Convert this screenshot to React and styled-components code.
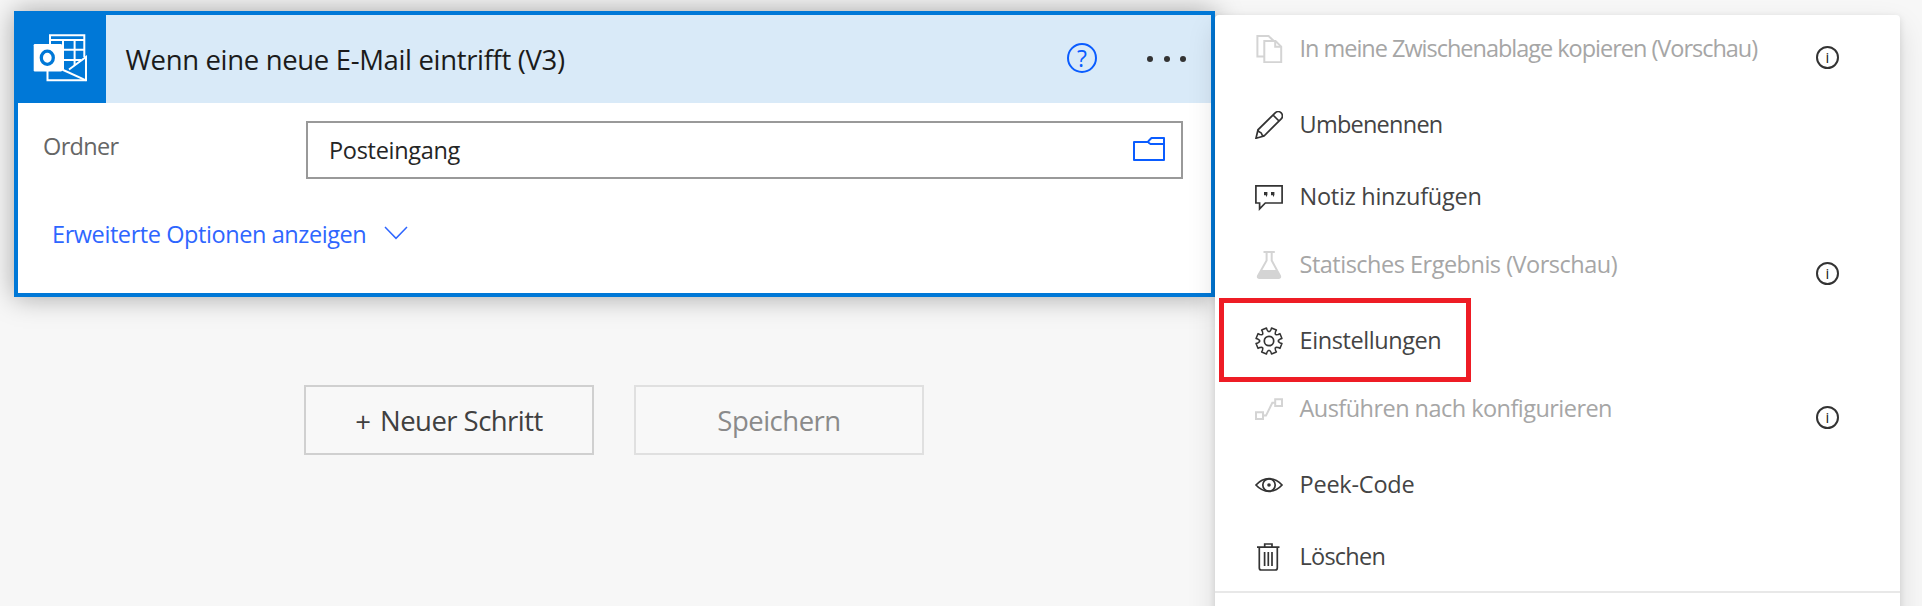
import React from "react";
import styled, { createGlobalStyle } from "styled-components";

const GlobalStyle = createGlobalStyle`
  * { box-sizing: border-box; }
  body {
    margin: 0;
    background: #f7f7f7;
    font-family: "Open Sans", "Noto Sans", sans-serif;
    color: #1b1b1b;
  }
`;

const Page = styled.div`
  display: flex;
  align-items: flex-start;
  width: 1922px;
  height: 606px;
  overflow: hidden;
  background: #f7f7f7;
`;

const Designer = styled.main`
  width: 1201px;
  margin: 11px 0 0 14px;
`;

const Text = styled.span`
  white-space: nowrap;
  letter-spacing: ${(p) => p.$spacing || 0}px;
`;

const Card = styled.section`
  height: 286px;
  border: 4px solid #0078d7;
  background: #fff;
  box-shadow: 0 0 26px rgba(0, 0, 0, 0.34);
`;

const CardHeader = styled.header`
  display: flex;
  align-items: center;
  height: 88px;
  padding-right: 25px;
  background: #d9eaf8;
  font-size: 27.5px;
`;

const ConnectorTile = styled.div`
  display: flex;
  align-items: center;
  width: 88px;
  height: 88px;
  margin-right: 19.5px;
  padding: 0 0 2px 15px;
  background: #0078d7;
`;

const HeaderActions = styled.div`
  display: flex;
  align-items: center;
  gap: 50px;
  margin-left: auto;
`;

const HelpBadge = styled.span`
  display: flex;
  align-items: center;
  justify-content: center;
  width: 30px;
  height: 30px;
  margin-bottom: 2px;
  border: 2px solid #0a5cff;
  border-radius: 50%;
  color: #0a5cff;
  font-size: 23px;
  line-height: 26px;
`;

const Dots = styled.span`
  display: flex;
  gap: 10.5px;
`;

const Dot = styled.i`
  width: 6px;
  height: 6px;
  border-radius: 50%;
  background: #333;
`;

const CardBody = styled.div`
  padding: 18px 28px 0 25px;
  font-size: 23.5px;
`;

const Field = styled.div`
  display: flex;
  align-items: flex-start;
`;

const FieldLabel = styled.label`
  width: 263px;
  padding-top: 13px;
  line-height: 24px;
  color: #666;
`;

const FieldBox = styled.div`
  display: flex;
  align-items: center;
  justify-content: space-between;
  width: 877px;
  height: 58px;
  padding: 0 16px 0 21px;
  border: 2px solid #999;
  color: #252525;
`;

const FolderIcon = styled.svg`
  width: 32px;
  height: 24px;
  margin-bottom: 2px;
`;

const AdvancedLink = styled.a`
  display: flex;
  align-items: center;
  gap: 18px;
  margin: 40px 0 0 9px;
  line-height: 30px;
  color: #2e66ff;
`;

const ChevronIcon = styled.svg`
  width: 24px;
  height: 14px;
  margin-bottom: 2px;
`;

const Actions = styled.div`
  display: flex;
  gap: 40px;
  margin: 88px 0 0 290px;
`;

const ActionButton = styled.button`
  display: flex;
  align-items: center;
  justify-content: center;
  gap: 9px;
  width: 290px;
  height: 70px;
  padding: 0;
  border: 2px solid ${(p) => (p.disabled ? "#e0e0e0" : "#d0d0d0")};
  background: #f8f8f8;
  color: ${(p) => (p.disabled ? "#8a8a8a" : "#404040")};
  font: 27.5px "Open Sans", "Noto Sans", sans-serif;
`;

const Plus = styled.span`
  padding-top: 4px;
  line-height: 30px;
`;

const Menu = styled.aside`
  position: relative;
  width: 685px;
  height: 640px;
  flex: none;
  margin-top: 15px;
  padding-top: 7px;
  border-radius: 4px;
  background: #fff;
  box-shadow: 0 12.8px 28.8px rgba(0, 0, 0, 0.13), 0 2.4px 7.2px rgba(0, 0, 0, 0.11);
`;

const MenuRow = styled.div`
  position: relative;
  display: flex;
  align-items: flex-start;
  height: 72px;
  padding: ${(p) => (p.$disabled ? 13 : 17)}px 61px 0 40px;
  color: ${(p) => (p.$disabled ? "#a6a6a6" : "#444")};
  font-size: 23.5px;
  line-height: 26px;
`;

const MenuIcon = styled.svg`
  width: 28px;
  height: 28px;
  margin-right: 16.5px;
  fill: none;
  stroke: ${(p) => (p.$disabled ? "#d4d4d4" : "#333")};
  stroke-width: ${(p) => (p.$disabled ? 2 : 1.7)};
`;

const InfoBadge = styled.span`
  display: flex;
  justify-content: center;
  width: 23px;
  height: 23px;
  margin: 11px 0 0 auto;
  border: 2px solid #333;
  border-radius: 50%;
  color: #1b1b1b;
  font-size: 15px;
  line-height: 19px;
`;

const Highlight = styled.div`
  position: absolute;
  left: 4px;
  top: -12px;
  width: 252px;
  height: 84px;
  border: 5px solid #ee1c25;
`;

const Divider = styled.hr`
  height: 2px;
  margin: -7px 0 0;
  border: 0;
  background: #e8e8e8;
`;

const gearPath = Array.from({ length: 8 }, (_, k) =>
  [[-10, 11.3], [-4, 9.4], [4, 9.4], [10, 11.3], [11, 13.2], [34, 13.2]].map(([deg, r]) => {
    const a = ((k * 45 + deg) * Math.PI) / 180;
    return `${(14 + r * Math.sin(a)).toFixed(2)} ${(14 - r * Math.cos(a)).toFixed(2)}`;
  })
).flat().join("L");

const icons = {
  copy: (
    <>
      <path d="M9 21.4H2.4V1h11.2l5 4.8" />
      <path d="M9.3 6H20.5L26.2 11.6V27.2H9.3Z" />
      <path d="M20.2 6v5.8h6" />
    </>
  ),
  pencil: (
    <>
      <path d="M1 27.2 3 18.8 20.2 1.9a4.2 4.2 0 0 1 6 6L9 25Z" />
      <path d="M3 18.8C3 21.8 6 20.8 6.3 22.2 6.6 24 7 24.6 9 25M18 4l6 6" />
    </>
  ),
  comment: (
    <>
      <path d="M.9 2.9H27.1V20H10.3L4.6 25.8V20H.9Z" />
      <path d="M9 9h3.400v3l-1.400 2.200V12.200H9ZM16 9h3.400v3l-1.400 2.200V12.200H16Z" fill="#333" stroke="none" />
    </>
  ),
  flask: (
    <>
      <path d="M8.5 1H19.8M11.6 1V9.5L3 24.8Q2.3 27 4.5 27H23.5Q25.7 27 25 24.8L16.7 9.5V1" />
      <path d="M6.5 19H21.7L25 25.5 24 27H4L3 25.5Z" fill="#d4d4d4" stroke="none" />
    </>
  ),
  gear: (
    <>
      <path d={`M${gearPath}Z`} strokeWidth="1.5" strokeLinejoin="round" />
      <circle cx="14" cy="14" r="4.7" />
    </>
  ),
  branch: (
    <>
      <path d="M1 17.2H8V24H1ZM20.2 4.2H27V11H20.2Z" />
      <path d="M8 20.6H11L17.3 7.8H20.2" />
    </>
  ),
  eye: (
    <>
      <path d="M1 14C5 9.5 9 7.7 14 7.7S23 9.5 27 14C23 18.5 19 20.3 14 20.3S5 18.5 1 14Z" />
      <circle cx="14" cy="14" r="6.2" />
      <circle cx="14" cy="14" r="1.8" fill="#333" stroke="none" />
    </>
  ),
  trash: (
    <>
      <path d="M2 4.2H24.5M9.7 4V1H17V4M4.3 4.2V25Q4.3 27 6.3 27H20.3Q22.3 27 22.3 25V4.2" />
      <path d="M9.6 9V23M13.3 9V23M17 9V23" />
    </>
  ),
};

const menuItems = [
  { label: "In meine Zwischenablage kopieren (Vorschau)", icon: "copy", spacing: -1.02, disabled: true },
  { label: "Umbenennen", icon: "pencil", spacing: -0.75 },
  { label: "Notiz hinzufügen", icon: "comment", spacing: -0.25 },
  { label: "Statisches Ergebnis (Vorschau)", icon: "flask", spacing: -0.5, disabled: true },
  { label: "Einstellungen", icon: "gear", spacing: -0.42, highlighted: true },
  { label: "Ausführen nach konfigurieren", icon: "branch", spacing: -0.54, disabled: true },
  { label: "Peek-Code", icon: "eye", spacing: -0.22 },
  { label: "Löschen", icon: "trash", spacing: -0.75 },
];

function OutlookLogo() {
  return (
    <svg width="56" height="50" viewBox="0 0 56 50" fill="none" stroke="#fff" strokeWidth="2">
      <path d="M17 12V2.2H51.3V24M17 7H51.3M30 7V36M41.6 7V32M28 16.7H51.3M28 27H48" />
      <path d="M14.5 37V47.3H53V24L36 36.5" />
      <path d="M28 36 53 47.3" />
      <rect x="0.7" y="11" width="28.3" height="27.4" rx="1.2" fill="#fff" stroke="none" />
      <ellipse cx="14.3" cy="24.8" rx="6" ry="6.6" stroke="#0078d7" strokeWidth="3.3" />
    </svg>
  );
}

export default function App() {
  return (
    <Page>
      <GlobalStyle />
      <Designer>
        <Card>
          <CardHeader>
            <ConnectorTile>
              <OutlookLogo />
            </ConnectorTile>
            <Text $spacing={-0.34}>Wenn eine neue E-Mail eintrifft (V3)</Text>
            <HeaderActions>
              <HelpBadge>?</HelpBadge>
              <Dots>
                <Dot />
                <Dot />
                <Dot />
              </Dots>
            </HeaderActions>
          </CardHeader>
          <CardBody>
            <Field>
              <FieldLabel>
                <Text $spacing={-0.65}>Ordner</Text>
              </FieldLabel>
              <FieldBox>
                <Text $spacing={-0.3}>Posteingang</Text>
                <FolderIcon viewBox="0 0 32 24" fill="none" stroke="#0a5cff" strokeWidth="2">
                  <path d="M15 5H1V23H31V1H18.5L15.5 4Q15 5 16 6L17.5 7H31" strokeLinejoin="round" />
                </FolderIcon>
              </FieldBox>
            </Field>
            <AdvancedLink>
              <Text $spacing={-0.42}>Erweiterte Optionen anzeigen</Text>
              <ChevronIcon viewBox="0 0 24 14" fill="none" stroke="#2e66ff" strokeWidth="1.5">
                <path d="M1 1 12 12.3 23 1" />
              </ChevronIcon>
            </AdvancedLink>
          </CardBody>
        </Card>
        <Actions>
          <ActionButton>
            <Plus>+</Plus>
            <Text $spacing={-0.55}>Neuer Schritt</Text>
          </ActionButton>
          <ActionButton disabled>
            <Text $spacing={-0.5}>Speichern</Text>
          </ActionButton>
        </Actions>
      </Designer>
      <Menu>
        {menuItems.map((item) => (
          <MenuRow key={item.label} $disabled={item.disabled}>
            <MenuIcon viewBox="0 0 28 28" $disabled={item.disabled}>
              {icons[item.icon]}
            </MenuIcon>
            <Text $spacing={item.spacing}>{item.label}</Text>
            {item.disabled && <InfoBadge>i</InfoBadge>}
            {item.highlighted && <Highlight />}
          </MenuRow>
        ))}
        <Divider />
      </Menu>
    </Page>
  );
}
